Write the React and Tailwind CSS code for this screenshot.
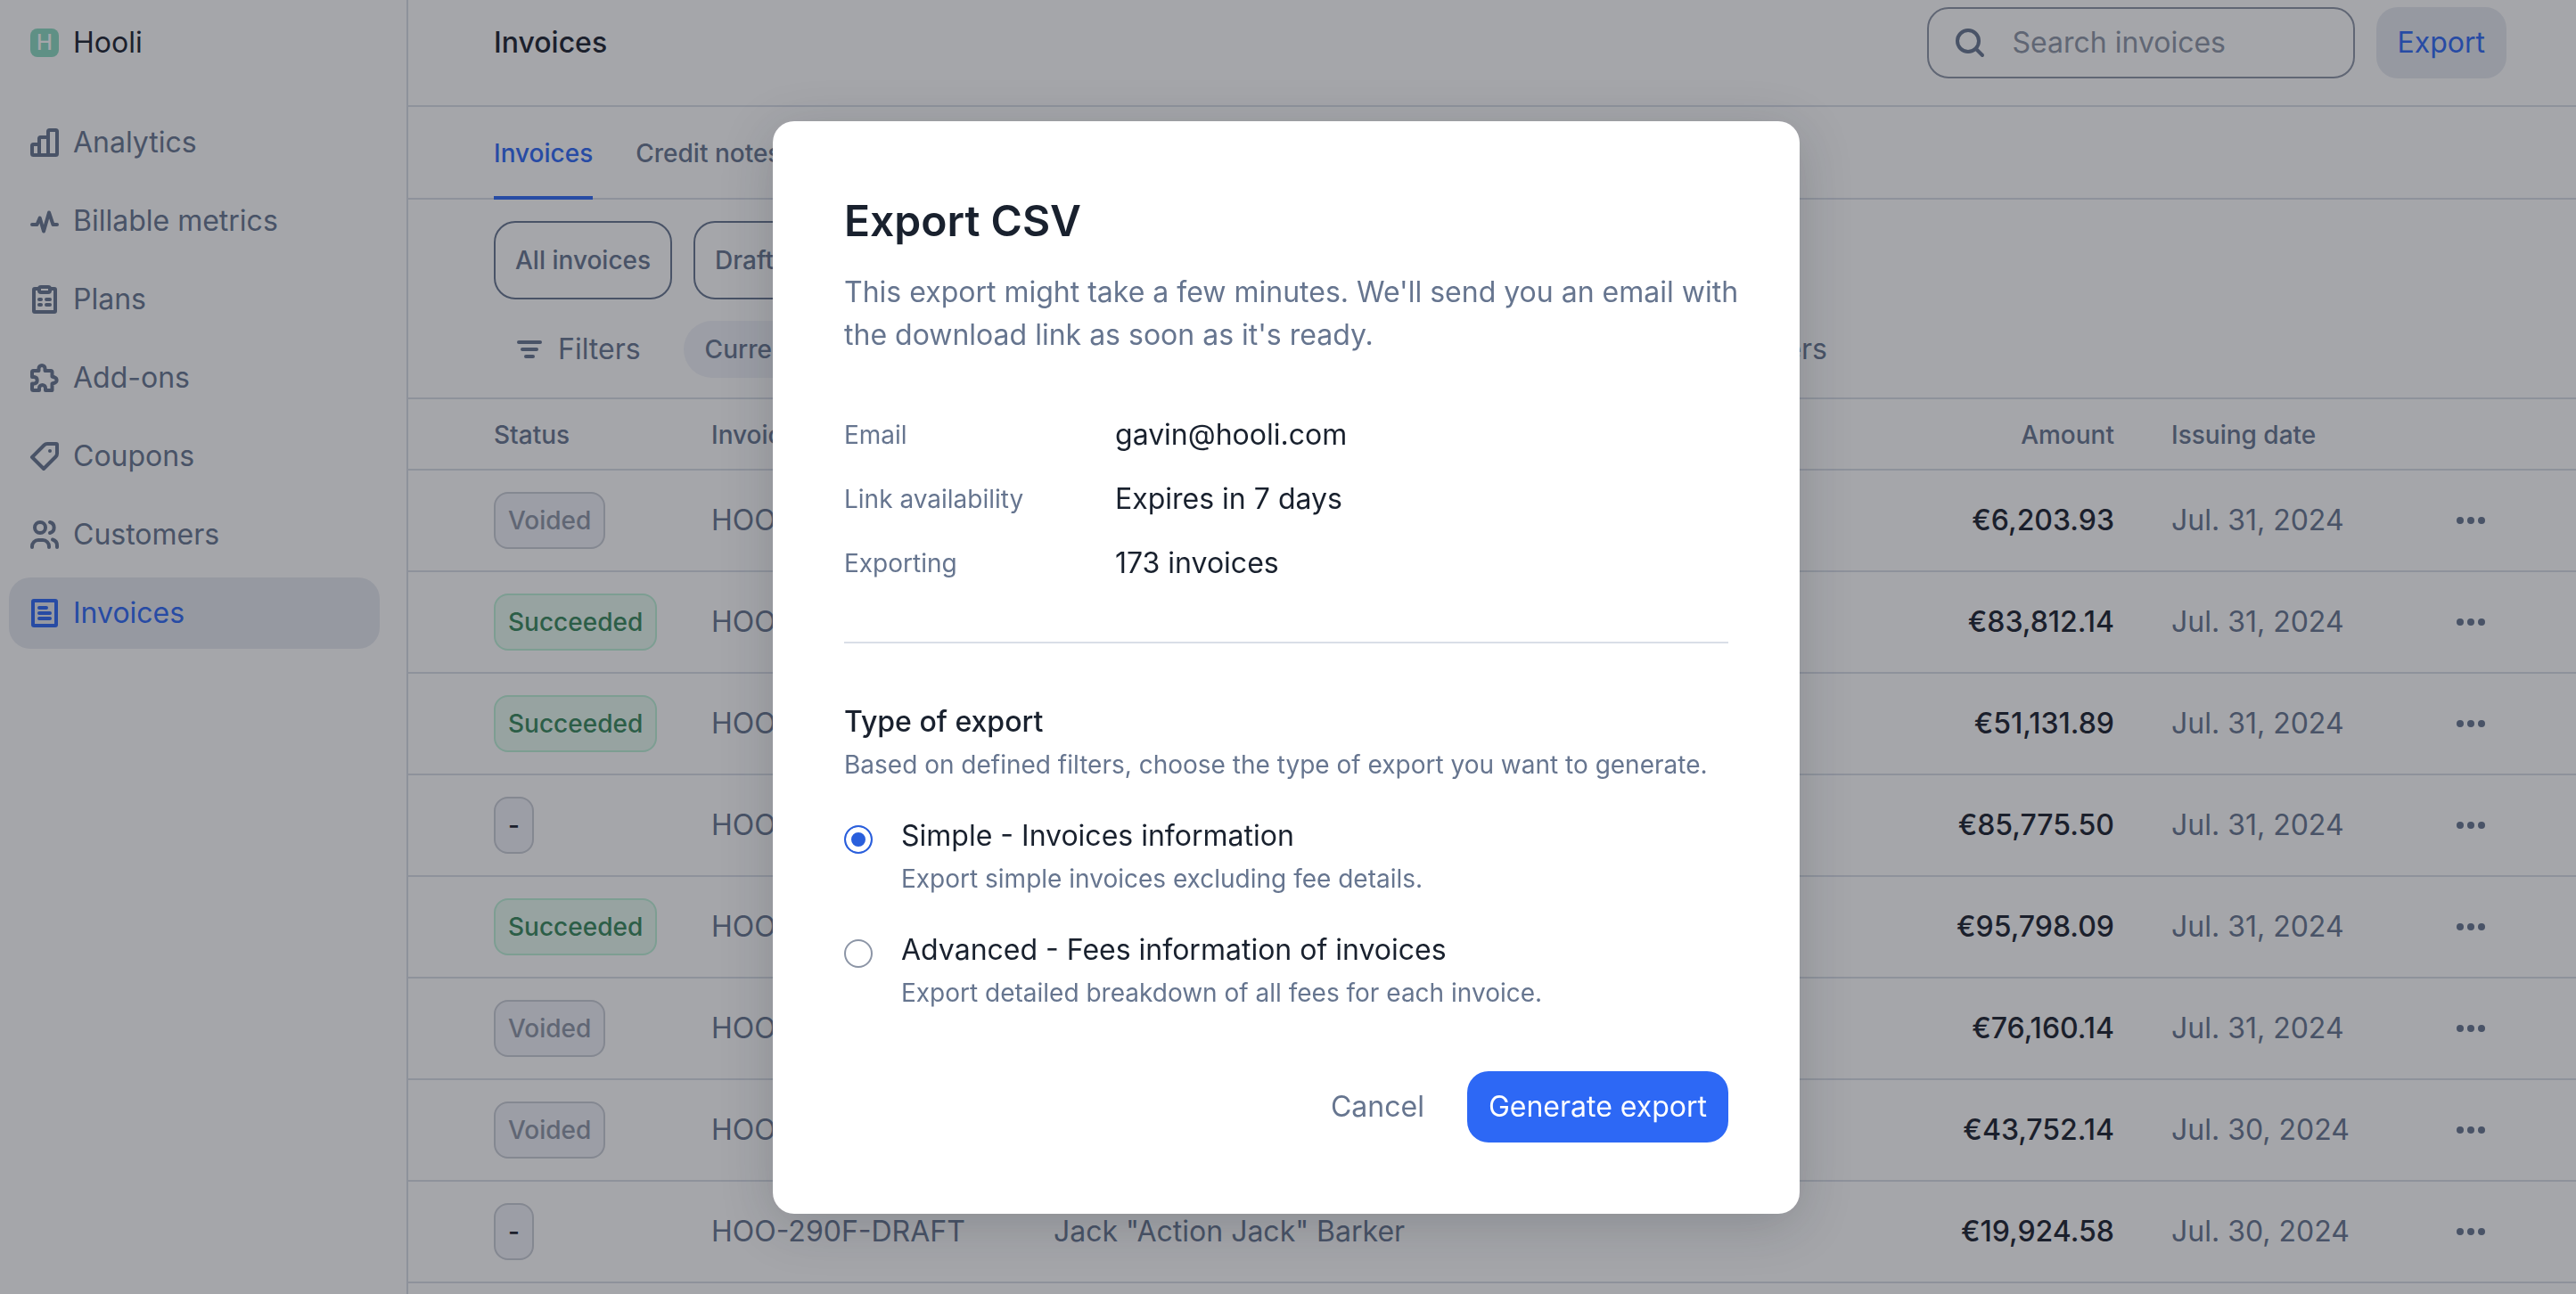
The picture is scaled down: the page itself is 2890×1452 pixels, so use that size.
import React from "react";

function Icon({ children, className = "" }) {
  return (
    <svg
      viewBox="0 0 32 32"
      className={`size-8 shrink-0 overflow-visible ${className}`}
      fill="none"
      stroke="currentColor"
      strokeWidth="4"
      strokeLinecap="round"
      strokeLinejoin="round"
      aria-hidden="true"
    >
      {children}
    </svg>
  );
}

const icons = {
  analytics: (
    <Icon>
      <path d="M10 30H3.5A1.5 1.5 0 0 1 2 28.500V19.500A1.500 1.500 0 0 1 3.500 18H10M10 30V11.500A1.500 1.500 0 0 1 11.500 10H20M10 30H20M20 30V3.500A1.500 1.500 0 0 1 21.500 2H28.500A1.500 1.500 0 0 1 30 3.500V28.500A1.500 1.500 0 0 1 28.500 30H20" />
    </Icon>
  ),
  metrics: (
    <Icon>
      <path d="M2 20H7.500L10.700 12.500L15 27.500L21 6.500L25.500 20H30" />
    </Icon>
  ),
  plans: (
    <Icon>
      <path d="M10 4H5A1 1 0 0 0 4 5V29A1 1 0 0 0 5 30H27A1 1 0 0 0 28 29V5A1 1 0 0 0 27 4H22" />
      <rect x="10" y="2" width="12" height="6" rx="2" />
      <path d="M10 16H12M18 16H22M10 22H12M18 22H22" />
    </Icon>
  ),
  addons: (
    <Icon>
      <path d="M9.500 8V5.500A3.500 3.500 0 0 1 16.500 5.500V8H23A1.500 1.500 0 0 1 24.500 9.500V14.500L27.500 15.500A3.200 3.200 0 0 1 27.500 21.500L24.500 22.500V30H17V27.500A3.500 3.500 0 0 0 10 27.500V30H3.500A1.500 1.500 0 0 1 2 28.500V22.500H4.500A3.800 3.800 0 0 0 4.500 15H2V9.500A1.500 1.500 0 0 1 3.500 8Z" />
    </Icon>
  ),
  coupons: (
    <Icon>
      <path d="M2 17L15.500 3.500C16.500 2.500 17.500 2 19 2H29A1 1 0 0 1 30 3V13C30 14.500 29.500 15.500 28.500 16.500L15 30Z" />
      <circle cx="22" cy="10" r="2" fill="currentColor" stroke="none" />
    </Icon>
  ),
  customers: (
    <Icon>
      <circle cx="11" cy="8" r="6" />
      <path d="M22 2A6.200 6.200 0 0 1 22 14" />
      <path d="M2 30V29A7 7 0 0 1 9 22H14A7 7 0 0 1 21 29V30" />
      <path d="M25 21.500C28.500 22.500 30 25 30 28V30" />
    </Icon>
  ),
  invoices: (
    <Icon>
      <rect x="3" y="2" width="26" height="28" rx="1" />
      <path d="M10 10H18M10 16H22M10 22H22" />
    </Icon>
  ),
  search: (
    <Icon>
      <circle cx="14" cy="14" r="12" />
      <path d="M23 23L30 30" />
    </Icon>
  ),
  filter: (
    <Icon>
      <path d="M4 8H28M8 16H24M12 24H20" />
    </Icon>
  ),
  dots: (
    <Icon>
      <g fill="currentColor" stroke="none">
        <circle cx="4" cy="16" r="4" />
        <circle cx="16" cy="16" r="4" />
        <circle cx="28" cy="16" r="4" />
      </g>
    </Icon>
  ),
};

const nav = [
  ["Analytics", "analytics"],
  ["Billable metrics", "metrics"],
  ["Plans", "plans"],
  ["Add-ons", "addons"],
  ["Coupons", "coupons"],
  ["Customers", "customers"],
  ["Invoices", "invoices"],
];

const rows = [
  ["Voided", "HOO-290F-173", "Gavin Belson", "€6,203.93", "Jul. 31, 2024"],
  ["Succeeded", "HOO-290F-172", "Richard Hendricks", "€83,812.14", "Jul. 31, 2024"],
  ["Succeeded", "HOO-290F-171", "Monica Hall", "€51,131.89", "Jul. 31, 2024"],
  ["-", "HOO-290F-DRAFT", "Laurie Bream", "€85,775.50", "Jul. 31, 2024"],
  ["Succeeded", "HOO-290F-170", "Bertram Gilfoyle", "€95,798.09", "Jul. 31, 2024"],
  ["Voided", "HOO-290F-169", "Dinesh Chugtai", "€76,160.14", "Jul. 31, 2024"],
  ["Voided", "HOO-290F-168", "Jared Dunn", "€43,752.14", "Jul. 30, 2024"],
  ["-", "HOO-290F-DRAFT", 'Jack "Action Jack" Barker', "€19,924.58", "Jul. 30, 2024"],
];

const badgeStyles = {
  Voided: "border-[#c9cdd6] bg-[#f0f2f8] text-[#8c95a6]",
  Succeeded: "border-[#bcf2d8] bg-[#e8faf1] text-[#36875b]",
  "-": "border-[#c9cdd6] bg-[#f0f2f8] text-[#19212e]",
};

function Badge({ status }) {
  return (
    <span
      className={`inline-flex h-16 items-center rounded-2xl border-2 px-3.5 text-[28px] font-medium ${badgeStyles[status]}`}
    >
      {status}
    </span>
  );
}

function Sidebar() {
  return (
    <aside className="flex w-[458px] shrink-0 flex-col gap-8 border-r-2 border-[#d9dee7] py-2 pr-[30px] pl-2.5">
      <button type="button" className="flex h-20 items-center gap-4 px-6 text-[#19212e]">
        <span className="flex size-8 items-center justify-center rounded-lg bg-[#8bdac1] text-2xl font-medium text-white">
          H
        </span>
        Hooli
      </button>
      <nav className="flex flex-col gap-2">
        {nav.map(([label, icon]) => (
          <a
            key={label}
            href={`#${icon}`}
            className={`flex h-20 items-center gap-4 rounded-3xl px-6 ${
              label === "Invoices" ? "bg-[#e7eaf1] text-[#2d68f5]" : ""
            }`}
          >
            {icons[icon]}
            {label}
          </a>
        ))}
      </nav>
    </aside>
  );
}

function Toolbar() {
  const chip =
    "flex h-16 items-center rounded-full bg-[#f0f2f8] px-6 text-[28px] font-medium whitespace-nowrap";
  const quick =
    "h-[88px] rounded-3xl border-2 border-[#66758f] px-[22px] text-[28px] font-medium whitespace-nowrap";
  return (
    <section className="flex flex-col gap-6 border-b-2 border-[#d9dee7] pt-6 pr-[78px] pb-[22px] pl-24">
      <div className="flex gap-6">
        {["All invoices", "Draft", "Outstanding", "Overdue", "Succeeded"].map((q) => (
          <button key={q} type="button" className={quick}>
            {q}
          </button>
        ))}
      </div>
      <div className="flex h-16 items-center gap-6">
        <button type="button" className="flex items-center gap-4 px-6">
          {icons.filter}
          Filters
        </button>
        <div className="flex w-[1056px] gap-6">
          <span className={chip}>Currency is EUR</span>
          <span className={`${chip} grow`}>Issuing date is from Jul. 1, 2024 to Jul. 31, 2024</span>
        </div>
        <button type="button" className="px-6">
          Reset filters
        </button>
      </div>
    </section>
  );
}

function InvoiceTable() {
  const th = "h-20 border-b-2 border-[#d9dee7] pt-0.5 text-left text-[28px] font-medium";
  const td = "h-[114px] border-b-2 border-[#d9dee7]";
  return (
    <table className="w-full table-fixed border-separate border-spacing-0">
      <thead>
        <tr>
          <th className={`${th} w-[340px] pl-24`}>Status</th>
          <th className={`${th} w-[384px]`}>Invoice number</th>
          <th className={th}>Customer</th>
          <th className={`${th} w-[320px] pr-8 !text-right`}>Amount</th>
          <th className={`${th} w-[328px] pl-8`}>Issuing date</th>
          <th className={`${th} w-[158px]`} aria-label="Actions"></th>
        </tr>
      </thead>
      <tbody>
        {rows.map(([status, number, customer, amount, date], i) => (
          <tr key={i}>
            <td className={`${td} pl-24`}>
              <div className="flex">
                <Badge status={status} />
              </div>
            </td>
            <td className={td}>{number}</td>
            <td className={td}>{customer}</td>
            <td className={`${td} pr-8 text-right font-medium text-[#19212e]`}>{amount}</td>
            <td className={`${td} pl-8`}>{date}</td>
            <td className={td}>
              <button
                type="button"
                aria-label={`Actions for ${number}`}
                className="flex size-20 items-center justify-center"
              >
                {icons.dots}
              </button>
            </td>
          </tr>
        ))}
      </tbody>
    </table>
  );
}

function ExportOption({ value, title, description, defaultChecked }) {
  return (
    <label className="flex items-start gap-8">
      <input
        type="radio"
        name="export-type"
        value={value}
        defaultChecked={defaultChecked}
        className="mt-3 size-8 shrink-0 appearance-none rounded-full border-2 border-[#8c95a6] bg-white checked:border-[#2a5fdc] checked:bg-[#2a5fdc] checked:shadow-[inset_0_0_0_6px_white]"
      />
      <span className="flex flex-col">
        <span className="text-[#19212e]">{title}</span>
        <span className="text-[28px] leading-12">{description}</span>
      </span>
    </label>
  );
}

function ExportDialog() {
  const details = [
    ["Email", "gavin@hooli.com"],
    ["Link availability", "Expires in 7 days"],
    ["Exporting", "173 invoices"],
  ];
  return (
    <div className="fixed inset-0 flex items-start justify-center bg-[#1e212b]/40 pt-[136px] pr-1">
      <div
        role="dialog"
        aria-modal="true"
        aria-labelledby="export-title"
        className="w-full max-w-6xl rounded-3xl bg-white p-20 shadow-[0_12px_60px_0_rgba(25,33,46,0.2)]"
      >
        <h2 id="export-title" className="text-5xl leading-16 font-semibold text-[#19212e]">
          Export CSV
        </h2>
        <p className="mt-6 whitespace-nowrap">
          This export might take a few minutes. We'll send you an email with
          <br />
          the download link as soon as it's ready.
        </p>
        <dl className="mt-16 flex flex-col gap-6">
          {details.map(([term, value]) => (
            <div key={term} className="flex items-center gap-6">
              <dt className="w-[280px] text-[28px] leading-10">{term}</dt>
              <dd className="text-[#19212e]">{value}</dd>
            </div>
          ))}
        </dl>
        <hr className="my-16 border-t-2 border-[#d9dee7]" />
        <fieldset>
          <legend className="font-medium text-[#19212e]">Type of export</legend>
          <p className="text-[28px] leading-12">
            Based on defined filters, choose the type of export you want to generate.
          </p>
          <div className="mt-8 flex flex-col gap-8">
            <ExportOption
              value="simple"
              title="Simple - Invoices information"
              description="Export simple invoices excluding fee details."
              defaultChecked
            />
            <ExportOption
              value="advanced"
              title="Advanced - Fees information of invoices"
              description="Export detailed breakdown of all fees for each invoice."
            />
          </div>
        </fieldset>
        <div className="mt-16 flex justify-end gap-6">
          <button type="button" className="h-20 rounded-3xl px-6">
            Cancel
          </button>
          <button type="button" className="h-20 rounded-3xl bg-[#2d68f5] px-6 text-white">
            Generate export
          </button>
        </div>
      </div>
    </div>
  );
}

export default function App() {
  return (
    <div className="flex h-screen overflow-hidden bg-white font-['Inter',sans-serif] text-[32px] leading-12 text-[#66758f]">
      <Sidebar />
      <main className="flex min-w-0 grow flex-col">
        <header className="flex h-[120px] shrink-0 items-start justify-between border-b-2 border-[#d9dee7] pt-2 pr-[78px] pl-24">
          <h1 className="flex h-20 items-center font-medium text-[#19212e]">Invoices</h1>
          <div className="flex gap-6">
            <label className="flex h-20 w-[480px] items-center gap-8 rounded-3xl border-2 border-[#8c95a6] px-[30px]">
              {icons.search}
              <input
                type="search"
                aria-label="Search invoices"
                placeholder="Search invoices"
                className="w-full min-w-0 outline-none placeholder:text-[#8c95a6]"
              />
            </label>
            <button type="button" className="h-20 rounded-3xl bg-[#e7eaf1] px-6 text-[#2d68f5]">
              Export
            </button>
          </div>
        </header>
        <div
          role="tablist"
          className="flex h-26 shrink-0 gap-12 border-b-2 border-[#d9dee7] pl-24 text-[28px] font-medium"
        >
          <button
            type="button"
            role="tab"
            aria-selected="true"
            className="-mb-0.5 border-b-4 border-[#2d68f5] pt-1 text-[#2d68f5]"
          >
            Invoices
          </button>
          <button type="button" role="tab" aria-selected="false" className="pt-0.5">
            Credit notes
          </button>
        </div>
        <Toolbar />
        <InvoiceTable />
      </main>
      <ExportDialog />
    </div>
  );
}
